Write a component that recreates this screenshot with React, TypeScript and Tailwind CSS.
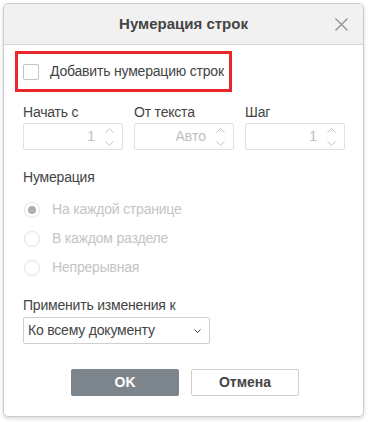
import React from "react";

const font = { fontFamily: '"Liberation Sans", Arial, sans-serif' };

function Spin() {
  return (
    <div className="flex flex-col items-center gap-[8px] w-[12px]">
      <svg width="9" height="5" viewBox="0 0 9 5" fill="none" stroke="#c4c4c4" strokeWidth="1">
        <path d="M0.5 4.5 L4.5 0.5 L8.5 4.5" />
      </svg>
      <svg width="9" height="5" viewBox="0 0 9 5" fill="none" stroke="#c4c4c4" strokeWidth="1">
        <path d="M0.5 0.5 L4.5 4.5 L8.5 0.5" />
      </svg>
    </div>
  );
}

function NumField({ label, value }: { label: string; value: string }) {
  return (
    <div className="flex flex-col w-[100px]">
      <span className="text-[14px] leading-[16px] text-[#444] tracking-[-0.2px]">{label}</span>
      <div className="mt-[3px] h-[27px] border border-[#e1e1e1] rounded-[2px] flex items-center justify-end pr-[7px] gap-[8px]">
        <span className="text-[14px] text-[#c0c0c0]">{value}</span>
        <Spin />
      </div>
    </div>
  );
}

function Radio({ label, checked }: { label: string; checked?: boolean }) {
  return (
    <div className="flex items-center h-[29px]">
      <div className="w-[16px] h-[16px] rounded-full border border-[#e3e3e3] flex items-center justify-center ml-[1px]">
        {checked && <div className="w-[8px] h-[8px] rounded-full bg-[#b0b0b0]" />}
      </div>
      <span className="ml-[12px] text-[14px] text-[#c4c4c4] tracking-[-0.2px]">{label}</span>
    </div>
  );
}

export default function App() {
  return (
    <div className="w-[368px] h-[422px] bg-white pt-[3px] pl-[3px]" style={font}>
      <div className="w-[361px] h-[414px] border border-[#cbcbcb] rounded-[5px] shadow-[0_2px_4px_rgba(0,0,0,0.15)] bg-white overflow-hidden flex flex-col">
        <div className="h-[41px] bg-[#f1f1f1] border-b border-[#d6d6d6] flex items-center justify-center relative shrink-0">
          <span className="text-[15px] font-bold text-[#444]">Нумерация строк</span>
          <svg className="absolute right-[15px] top-[14px]" width="13" height="13" viewBox="0 0 13 13" fill="none" stroke="#8a8a8a" strokeWidth="1.1">
            <path d="M0.5 0.5 L12.5 12.5 M12.5 0.5 L0.5 12.5" />
          </svg>
        </div>

        <div className="flex flex-col pl-[11px] pt-[6px]">
          <div className="w-[217px] h-[41px] border-[3px] border-[#e8262b] flex items-center pl-[5px]">
            <div className="w-[16px] h-[16px] border border-[#c3c3c3] rounded-[2px] bg-white" />
            <span className="ml-[11px] text-[14px] text-[#444] tracking-[-0.2px]">Добавить нумерацию строк</span>
          </div>

          <div className="flex gap-[11px] pl-[8px] mt-[12px]">
            <NumField label="Начать с" value="1" />
            <NumField label="От текста" value="Авто" />
            <NumField label="Шаг" value="1" />
          </div>

          <div className="pl-[8px] mt-[19px] flex flex-col">
            <span className="text-[14px] leading-[16px] text-[#444] tracking-[-0.2px]">Нумерация</span>
            <div className="mt-[10px] flex flex-col">
              <Radio label="На каждой странице" checked />
              <Radio label="В каждом разделе" />
              <Radio label="Непрерывная" />
            </div>
          </div>

          <div className="pl-[8px] mt-[15px] flex flex-col">
            <span className="text-[14px] leading-[16px] text-[#444] tracking-[-0.2px]">Применить изменения к</span>
            <div className="mt-[4px] w-[187px] h-[27px] border border-[#cfcfcf] rounded-[2px] flex items-center justify-between pl-[4px] pr-[8px]">
              <span className="text-[14px] text-[#444] tracking-[-0.2px]">Ко всему документу</span>
              <svg width="7" height="4" viewBox="0 0 7 4" fill="none" stroke="#444" strokeWidth="1">
                <path d="M0.5 0.5 L3.5 3.5 L6.5 0.5" />
              </svg>
            </div>
          </div>

          <div className="flex gap-[12px] pl-[56px] mt-[25px]">
            <button className="w-[108px] h-[27px] bg-[#7d858c] rounded-[2px] text-white text-[14px] font-bold">OK</button>
            <button className="w-[108px] h-[27px] border border-[#cfcfcf] rounded-[2px] text-[#444] text-[14px] font-bold bg-white">Отмена</button>
          </div>
        </div>
      </div>
    </div>
  );
}
